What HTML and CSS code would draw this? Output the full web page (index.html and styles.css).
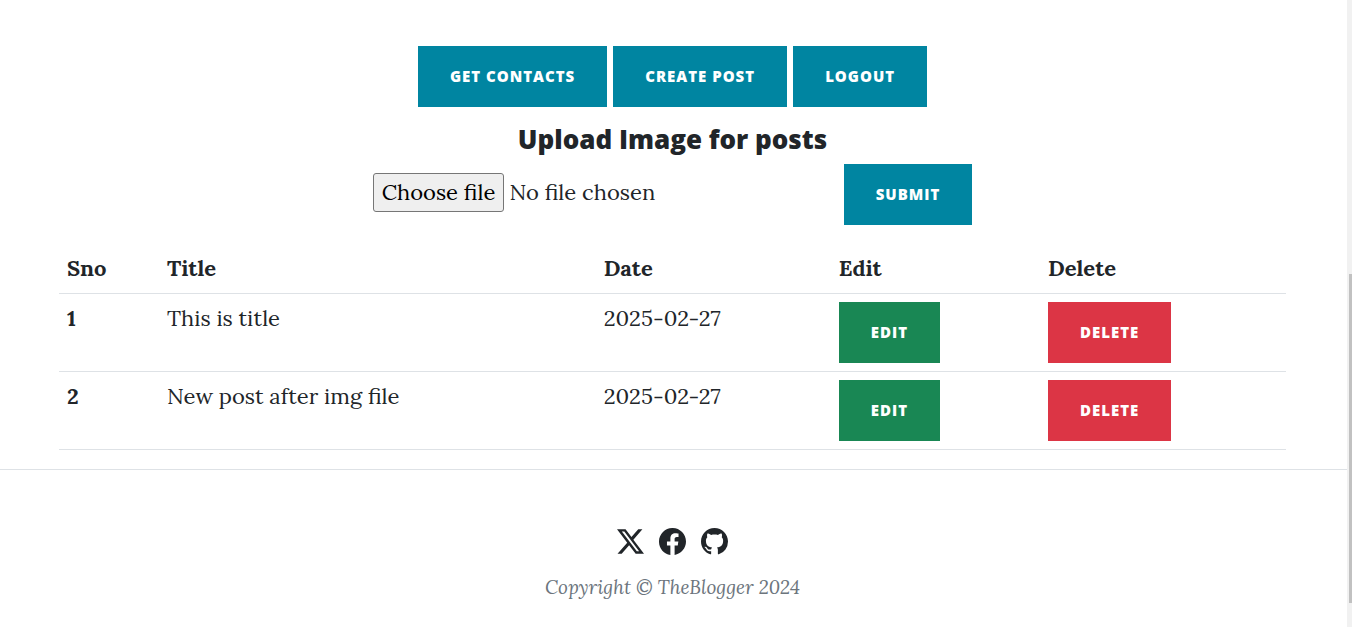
FILE: index.html
```html
<!DOCTYPE html>
<html lang="en">
<head>
<meta charset="utf-8">
<meta name="viewport" content="width=device-width, initial-scale=1">
<title>TheBlogger - Dashboard</title>
<link rel="stylesheet" href="styles.css">
</head>
<body>
<div class="page">
  <main class="container">
    <nav class="actions">
      <a class="btn btn-primary" href="#contacts">Get Contacts</a>
      <a class="btn btn-primary" href="#create">Create Post</a>
      <a class="btn btn-primary" href="#logout">Logout</a>
    </nav>
    <h4 class="heading">Upload Image for posts</h4>
    <form class="upload">
      <label class="file">
        <input class="file-input" type="file">
        <span class="file-button">Choose file</span>
        <span class="file-name">No file chosen</span>
      </label>
      <button class="btn btn-primary" type="button">Submit</button>
    </form>
    <table class="table">
      <colgroup>
        <col class="col-sno"><col class="col-title"><col class="col-date"><col class="col-edit"><col class="col-delete">
      </colgroup>
      <thead>
        <tr><th scope="col">Sno</th><th scope="col">Title</th><th scope="col">Date</th><th scope="col">Edit</th><th scope="col">Delete</th></tr>
      </thead>
      <tbody>
        <tr>
          <th scope="row">1</th><td>This is title</td><td>2025-02-27</td>
          <td><a class="btn btn-success" href="#edit-1">Edit</a></td>
          <td><a class="btn btn-danger" href="#delete-1">Delete</a></td>
        </tr>
        <tr>
          <th scope="row">2</th><td>New post after img file</td><td>2025-02-27</td>
          <td><a class="btn btn-success" href="#edit-2">Edit</a></td>
          <td><a class="btn btn-danger" href="#delete-2">Delete</a></td>
        </tr>
      </tbody>
    </table>
  </main>
  <footer class="footer">
    <div class="social">
      <a href="#x" aria-label="X"><svg viewBox="0 0 16 16"><path d="M12.6.75h2.454l-5.36 6.142L16 15.25h-4.937l-3.867-5.07-4.425 5.07H.316l5.733-6.57L0 .75h5.063l3.495 4.633L12.601.75Zm-.86 13.028h1.36L4.323 2.145H2.865z"/></svg></a>
      <a href="#facebook" aria-label="Facebook"><svg viewBox="0 0 16 16"><path d="M16 8.049c0-4.446-3.582-8.05-8-8.05C3.58 0-.002 3.603-.002 8.05c0 4.017 2.926 7.347 6.75 7.951v-5.625h-2.03V8.05H6.75V6.275c0-2.017 1.195-3.131 3.022-3.131.876 0 1.791.157 1.791.157v1.98h-1.009c-.993 0-1.303.621-1.303 1.258v1.51h2.218l-.354 2.326H9.25V16c3.824-.604 6.75-3.934 6.75-7.951"/></svg></a>
      <a href="#github" aria-label="GitHub"><svg viewBox="0 0 16 16"><path d="M8 0C3.58 0 0 3.58 0 8c0 3.54 2.29 6.53 5.47 7.59.4.07.55-.17.55-.38 0-.19-.01-.82-.01-1.49-2.01.37-2.53-.49-2.69-.94-.09-.23-.48-.94-.82-1.13-.28-.15-.68-.52-.01-.53.63-.01 1.08.58 1.23.82.72 1.21 1.87.87 2.33.66.07-.52.28-.87.51-1.07-1.78-.2-3.64-.89-3.64-3.95 0-.87.31-1.59.82-2.15-.08-.2-.36-1.02.08-2.12 0 0 .67-.21 2.2.82.64-.18 1.32-.27 2-.27s1.36.09 2 .27c1.53-1.04 2.2-.82 2.2-.82.44 1.1.16 1.92.08 2.12.51.56.82 1.27.82 2.15 0 3.07-1.87 3.75-3.65 3.95.29.25.54.73.54 1.48 0 1.07-.01 1.93-.01 2.2 0 .21.15.46.55.38A8.01 8.01 0 0 0 16 8c0-4.42-3.58-8-8-8"/></svg></a>
    </div>
    <p class="copyright">Copyright © TheBlogger 2024</p>
  </footer>
</div>
<div class="scrollbar"><div class="scrollbar-thumb"></div></div>
</body>
</html>
```
FILE: styles.css
```css
*, *::before, *::after { box-sizing: border-box; }

body {
  margin: 0;
  background: #fff;
  color: #212529;
  font-family: Lora, "Liberation Serif", serif;
  font-size: 22px;
  line-height: 33px;
}

.page { margin-right: 5px; }

.container { padding: 46px 61px 19px 59px; }

.actions {
  display: flex;
  justify-content: center;
  gap: 6px;
}

.btn {
  display: inline-block;
  padding: 20px 32px;
  border: 0;
  color: #fff;
  font-family: "Open Sans", sans-serif;
  font-size: 15px;
  font-weight: 800;
  line-height: 21px;
  letter-spacing: 1px;
  text-align: center;
  text-decoration: none;
  text-transform: uppercase;
  vertical-align: top;
}

.btn-primary { background: #0085a1; }
.btn-success { background: #198754; }
.btn-danger { background: #dc3545; }

.heading {
  margin: 16px 0 8px;
  font-family: "Open Sans", sans-serif;
  font-size: 26px;
  font-weight: 800;
  line-height: 33px;
  text-align: center;
}

.upload {
  display: flex;
  justify-content: center;
  align-items: center;
}

.file {
  display: flex;
  align-items: center;
  gap: 5px;
  width: 471px;
  padding-bottom: 4px;
}

.file-input {
  position: absolute;
  width: 1px;
  height: 1px;
  opacity: 0;
}

.file-button {
  padding: 2px 8px;
  border: 1px solid #767676;
  border-radius: 3px;
  background: #efefef;
  color: #000;
}

.table {
  width: 100%;
  margin-top: 19px;
  border-collapse: collapse;
  table-layout: fixed;
}

.col-sno { width: 8.15%; }
.col-title { width: 35.6%; }
.col-date { width: 19.15%; }
.col-edit { width: 17.05%; }

.table th, .table td {
  padding: 8px;
  border-bottom: 1px solid #dee2e6;
  text-align: left;
  vertical-align: top;
}

.footer {
  display: flex;
  flex-direction: column;
  align-items: center;
  padding: 58px 2px 20px 0;
  border-top: 1px solid #dee2e6;
}

.social { display: flex; gap: 15px; }
.social a { color: #212529; }
.social svg {
  display: block;
  width: 27px;
  height: 27px;
  fill: currentColor;
}

.copyright {
  margin: 16px 0 0;
  color: #6c757d;
  font-size: 19px;
  font-style: italic;
  line-height: 33px;
}

.scrollbar {
  position: fixed;
  top: 0;
  right: 0;
  bottom: 0;
  width: 5px;
  padding-left: 2px;
  background: #f1f1f1;
}

.scrollbar-thumb {
  height: 52.5%;
  margin-top: 43.7vh;
  background: #c1c1c1;
}
```
